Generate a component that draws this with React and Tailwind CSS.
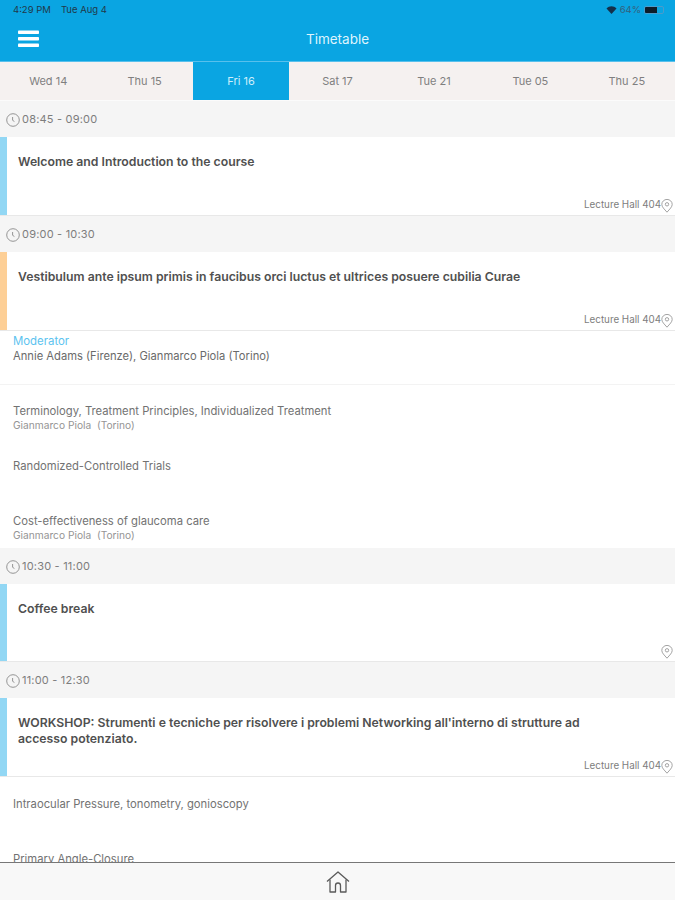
const days = ['Wed 14', 'Thu 15', 'Fri 16', 'Sat 17', 'Tue 21', 'Tue 05', 'Thu 25'];

function ClockIcon() {
    return (
        <svg width="14" height="14" viewBox="0 0 14 14" fill="none" stroke="#8a8a8a" strokeWidth="0.9" className="shrink-0">
            <circle cx="7" cy="7" r="6.3" />
            <path d="M6.6 4v3.3l1.8 1.2" />
        </svg>
    );
}

function PinIcon() {
    return (
        <svg width="12" height="14" viewBox="0 0 12 14" fill="none" stroke="#9a9a9a" strokeWidth="0.9" className="shrink-0">
            <path d="M6 13.2C3.2 10 .8 7.900 .8 5.400a5.200 5 0 0 1 10.400 0C11.200 7.900 8.800 10 6 13.200z" />
            <circle cx="6" cy="5.300" r="1.700" />
        </svg>
    );
}

function SlotHeader({ time }) {
    return (
        <div className="h-9 bg-[#f5f5f5] flex items-center pl-[6px] pt-[1px] gap-[2px] text-[11px] tracking-[0.2px] text-[#7d7d7d]">
            <ClockIcon />
            <span>{time}</span>
        </div>
    );
}

function Card({ title, place, bar, short }) {
    return (
        <div className={`${short ? 'h-[78px]' : 'h-[79px]'} bg-white border-b border-[#e8e8e8] flex`}>
            <div className={`w-[7px] shrink-0 ${bar}`} />
            <div className="flex-1 flex flex-col pl-[11px] pr-[2px] min-w-0">
                <div className="mt-[17px] max-w-[575px] text-[12.25px] leading-[16px] font-semibold text-[#505050]">{title}</div>
                <div className="mt-auto mb-[2px] flex items-center justify-end text-[9.8px] text-[#7d7d7d]">
                    {place && <span>{place}</span>}
                    <PinIcon />
                </div>
            </div>
        </div>
    );
}

function Row({ title, speaker, last }) {
    return (
        <div className={`${last ? 'h-[53px]' : 'h-[55px]'} bg-white pl-[13px] pt-[19px]`}>
            <div className="text-[11.25px] leading-[14px] text-[#727272]">{title}</div>
            {speaker && <div className="whitespace-pre text-[10.2px] leading-[14px] text-[#949494]">{speaker}</div>}
        </div>
    );
}

export default function App() {
    return (
        <div className="w-[675px] h-[900px] flex flex-col overflow-hidden bg-white font-['Inter',sans-serif]">
            {/* Barra blu */}
            <div className="h-[61px] shrink-0 bg-[#0aa5e2] flex flex-col">
                <div className="h-[19px] pt-[1px] flex items-center justify-between pl-[13px] pr-[11px] text-[9.5px] text-[#20394a]">
                    <div className="flex gap-[10px]">
                        <span>4:29 PM</span>
                        <span>Tue Aug 4</span>
                    </div>
                    <div className="flex items-center gap-[3px]">
                        <svg width="11" height="8" viewBox="0 0 10 8" fill="#14304a">
                            <path d="M0 2.500C2.800-.5 7.200-.5 10 2.500L5 8z" />
                        </svg>
                        <span className="text-[#35607c]">64%</span>
                        <div className="w-[20px] h-[8px] rounded-[2px] border border-[#4a9ccc] overflow-hidden">
                            <div className="w-[12px] h-full bg-[#0d1c28]" />
                        </div>
                    </div>
                </div>
                <div className="relative flex-1 flex items-center justify-center">
                    <svg className="absolute left-[18px] top-[11px]" width="21" height="18" viewBox="0 0 21 18" fill="#ffffff">
                        <rect y="0.500" width="21" height="3.500" rx="0.800" />
                        <rect y="7" width="21" height="3.500" rx="0.800" />
                        <rect y="13.500" width="21" height="3.500" rx="0.800" />
                    </svg>
                    <span className="text-[13.5px] text-[#dff4fd] -mt-[1px]">Timetable</span>
                </div>
            </div>

            {/* Giorni */}
            <div className="h-[40px] shrink-0 bg-[#f5f1f0] border-t border-[#58c0ec] border-b border-b-[#fbfbfb] grid grid-cols-7">
                {days.map((day, i) => (
                    <div key={day} className={`flex items-center justify-center pt-[1px] text-[11px] ${i === 2 ? 'bg-[#0aa5e2] text-[#cdeefb]' : 'text-[#7f7f7f]'}`}>
                        {day}
                    </div>
                ))}
            </div>

            <div className="flex-1 min-h-0 overflow-hidden">
                <SlotHeader time="08:45 - 09:00" />
                <Card title="Welcome and Introduction to the course" place="Lecture Hall 404" bar="bg-[#92d7f4]" />
                <SlotHeader time="09:00 - 10:30" />
                <Card title="Vestibulum ante ipsum primis in faucibus orci luctus et ultrices posuere cubilia Curae" place="Lecture Hall 404" bar="bg-[#fdcf96]" />

                <div className="h-[54px] bg-white border-b border-[#f3f3f3] pl-[13px] pt-[3px]">
                    <div className="text-[11.4px] leading-[14px] text-[#5cc3ef]">Moderator</div>
                    <div className="text-[11.2px] leading-[16px] text-[#6a6a6a]">Annie Adams (Firenze), Gianmarco Piola (Torino)</div>
                </div>
                <Row title="Terminology, Treatment Principles, Individualized Treatment" speaker="Gianmarco Piola  (Torino)" />
                <Row title="Randomized-Controlled Trials" />
                <Row title="Cost-effectiveness of glaucoma care" speaker="Gianmarco Piola  (Torino)" last />

                <SlotHeader time="10:30 - 11:00" />
                <Card title="Coffee break" bar="bg-[#92d7f4]" short />
                <SlotHeader time="11:00 - 12:30" />
                <Card title="WORKSHOP: Strumenti e tecniche per risolvere i problemi Networking all'interno di strutture ad accesso potenziato." place="Lecture Hall 404" bar="bg-[#92d7f4]" />
                <div className="pt-[1px]">
                    <Row title="Intraocular Pressure, tonometry, gonioscopy" />
                    <Row title="Primary Angle-Closure" />
                </div>
            </div>

            {/* Barra home */}
            <div className="h-[38px] shrink-0 bg-[#f8f8f8] border-t border-[#777777] flex items-center justify-center">
                <svg width="24" height="22" viewBox="0 0 24 22" fill="none" stroke="#5a5a5a" strokeWidth="1.300" strokeLinejoin="round">
                    <path d="M1 10.500 12 1l11 9.500" />
                    <path d="M4 8.500V21h5.500v-6.500a2.500 2.500 0 0 1 5 0V21H20V8.500" />
                </svg>
            </div>
        </div>
    );
}
